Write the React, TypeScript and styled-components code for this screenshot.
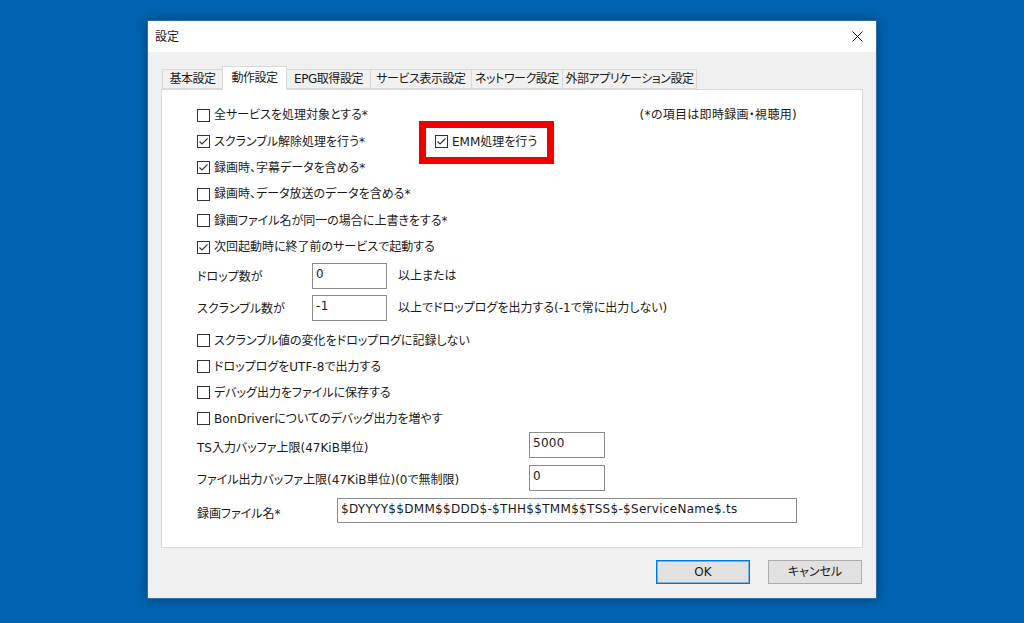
import React from 'react';
import styled, { createGlobalStyle } from 'styled-components';

const Global = createGlobalStyle`
  html, body { margin: 0; padding: 0; }
  body {
    background: #0063b1;
    width: 1024px;
    height: 623px;
    overflow: hidden;
    font-family: "DejaVu Sans", "Noto Sans CJK JP", sans-serif;
    font-size: 12px;
    line-height: 16px;
    color: #1a1a1a;
    font-feature-settings: "palt";
  }
`;

const Desktop = styled.div`
  width: 1024px;
  height: 623px;
  box-sizing: border-box;
  padding: 20px 0 0 147px;
  background: #0063b1;
`;

const Dialog = styled.div`
  width: 730px;
  height: 579px;
  box-sizing: border-box;
  border: 1px solid #2a6eae;
  background: #f0f0f0;
  box-shadow: 0 0 12px rgba(0, 0, 0, 0.35);
  display: flex;
  flex-direction: column;
`;

const TitleBar = styled.div`
  height: 31px;
  flex: none;
  background: #fff;
  display: flex;
  align-items: center;
  justify-content: space-between;
  padding-left: 7px;
`;

const TitleText = styled.span`
  font-size: 12px;
`;

const CloseButton = styled.div`
  width: 38px;
  height: 31px;
  display: flex;
  align-items: center;
  justify-content: center;
`;

const Body = styled.div`
  flex: 1;
  display: flex;
  flex-direction: column;
  padding: 14px 13px 14px 13px;
`;

const TabStrip = styled.div`
  display: flex;
  align-items: flex-end;
  height: 23px;
  margin-left: 1px;
  position: relative;
  z-index: 1;
`;

const Tab = styled.div<{ $w: number; $active?: boolean }>`
  width: ${(p) => p.$w}px;
  height: ${(p) => (p.$active ? 24 : 20)}px;
  margin-bottom: ${(p) => (p.$active ? -1 : 0)}px;
  box-sizing: border-box;
  border: 1px solid #d9d9d9;
  border-bottom: ${(p) => (p.$active ? 'none' : '1px solid #d9d9d9')};
  background: ${(p) => (p.$active ? '#fff' : '#f0f0f0')};
  display: flex;
  align-items: center;
  justify-content: center;
  padding-bottom: ${(p) => (p.$active ? 2 : 0)}px;
  white-space: nowrap;
  letter-spacing: -0.45px;
  overflow: hidden;
  & + & {
    margin-left: -1px;
  }
  position: relative;
  z-index: ${(p) => (p.$active ? 2 : 1)};
`;

const Panel = styled.div`
  height: 459px;
  box-sizing: border-box;
  border: 1px solid #d9d9d9;
  background: #fff;
  padding: 12px 0 0 35px;
`;

const Content = styled.div`
  width: 600px;
  display: flex;
  flex-direction: column;
`;

const Row = styled.div<{ $h?: number; $mt?: number; $between?: boolean }>`
  display: flex;
  align-items: center;
  height: ${(p) => p.$h ?? 26}px;
  margin-top: ${(p) => p.$mt ?? 0}px;
  justify-content: ${(p) => (p.$between ? 'space-between' : 'flex-start')};
  white-space: nowrap;
`;

const Cell = styled.div<{ $w: number; $drop?: number }>`
  width: ${(p) => p.$w}px;
  flex: none;
  padding-top: ${(p) => p.$drop ?? 0}px;
  display: flex;
  align-items: center;
`;

const CheckItem = styled.label`
  display: inline-flex;
  align-items: center;
  gap: 4px;
  height: 26px;
  position: relative;
`;

const Box = styled.span`
  width: 13px;
  height: 13px;
  box-sizing: border-box;
  border: 1px solid #333;
  background: #fff;
  display: inline-flex;
  align-items: center;
  justify-content: center;
  flex: none;
`;

const RedFrame = styled.span`
  position: absolute;
  left: -16px;
  right: -17px;
  top: -8px;
  bottom: -9px;
  border: 7px solid #f20000;
  pointer-events: none;
`;

const Note = styled.span`
  letter-spacing: 0.3px;
`;

const Field = styled.input<{ $w: number; $h?: number }>`
  width: ${(p) => p.$w}px;
  height: ${(p) => p.$h ?? 26}px;
  box-sizing: border-box;
  border: 1px solid #8c8c8c;
  background: #fff;
  font: inherit;
  font-size: 12px;
  letter-spacing: 0.3px;
  color: #1a1a1a;
  padding: 0 3px 3px 3px;
  margin: 0;
  outline: none;
  flex: none;
`;

const After = styled.span`
  margin-left: 11px;
`;

const ButtonBar = styled.div`
  display: flex;
  justify-content: flex-end;
  gap: 18px;
  margin-top: 12px;
  margin-right: 1px;
`;

const Button = styled.div<{ $default?: boolean }>`
  width: 94px;
  height: 24px;
  box-sizing: border-box;
  background: #e1e1e1;
  border: 1px solid ${(p) => (p.$default ? '#0078d7' : '#adadad')};
  box-shadow: ${(p) => (p.$default ? 'inset 0 0 0 1px rgba(0,120,215,0.45)' : 'none')};
  display: flex;
  align-items: center;
  justify-content: center;
`;

const Check: React.FC<{ checked?: boolean }> = ({ checked }) => (
  <Box>
    {checked && (
      <svg width="11" height="11" viewBox="0 0 11 11">
        <polyline points="1.5,5.5 4,8 9.5,2.5" fill="none" stroke="#333" strokeWidth="1.1" />
      </svg>
    )}
  </Box>
);

const CheckRowItem: React.FC<{ checked?: boolean; children: React.ReactNode }> = ({ checked, children }) => (
  <CheckItem>
    <Check checked={checked} />
    <span>{children}</span>
  </CheckItem>
);

const tabs: { label: string; w: number; active?: boolean }[] = [
  { label: '基本設定', w: 61 },
  { label: '動作設定', w: 65, active: true },
  { label: 'EPG取得設定', w: 85 },
  { label: 'サービス表示設定', w: 102 },
  { label: 'ネットワーク設定', w: 92 },
  { label: '外部アプリケーション設定', w: 135 },
];

export default function App() {
  return (
    <>
      <Global />
      <Desktop>
        <Dialog>
          <TitleBar>
            <TitleText>設定</TitleText>
            <CloseButton>
              <svg width="11" height="11" viewBox="0 0 11 11">
                <path d="M0.5 0.5 L10.5 10.5 M10.5 0.5 L0.5 10.5" stroke="#111" strokeWidth="1" />
              </svg>
            </CloseButton>
          </TitleBar>
          <Body>
            <TabStrip>
              {tabs.map((t) => (
                <Tab key={t.label} $w={t.w} $active={t.active}>
                  {t.label}
                </Tab>
              ))}
            </TabStrip>
            <Panel>
              <Content>
                <Row $h={26.4} $between>
                  <CheckRowItem>全サービスを処理対象とする*</CheckRowItem>
                  <Note>(*の項目は即時録画・視聴用)</Note>
                </Row>
                <Row $h={26.4}>
                  <Cell $w={238}>
                    <CheckRowItem checked>スクランブル解除処理を行う*</CheckRowItem>
                  </Cell>
                  <CheckItem>
                    <Check checked />
                    <span>EMM処理を行う</span>
                    <RedFrame />
                  </CheckItem>
                </Row>
                <Row $h={26.4}>
                  <CheckRowItem checked>録画時、字幕データを含める*</CheckRowItem>
                </Row>
                <Row $h={26.4}>
                  <CheckRowItem>録画時、データ放送のデータを含める*</CheckRowItem>
                </Row>
                <Row $h={26.4}>
                  <CheckRowItem>録画ファイル名が同一の場合に上書きをする*</CheckRowItem>
                </Row>
                <Row $h={26.4}>
                  <CheckRowItem checked>次回起動時に終了前のサービスで起動する</CheckRowItem>
                </Row>

                <Row $mt={2.6}>
                  <Cell $w={115} $drop={2}>ドロップ数が</Cell>
                  <Field $w={75} readOnly value="0" />
                  <After>以上または</After>
                </Row>
                <Row $mt={6}>
                  <Cell $w={115} $drop={2}>スクランブル数が</Cell>
                  <Field $w={75} readOnly value="-1" />
                  <After>以上でドロップログを出力する(-1で常に出力しない)</After>
                </Row>

                <Row $mt={7}>
                  <CheckRowItem>スクランブル値の変化をドロップログに記録しない</CheckRowItem>
                </Row>
                <Row>
                  <CheckRowItem>ドロップログをUTF-8で出力する</CheckRowItem>
                </Row>
                <Row>
                  <CheckRowItem>デバッグ出力をファイルに保存する</CheckRowItem>
                </Row>
                <Row>
                  <CheckRowItem>BonDriverについてのデバッグ出力を増やす</CheckRowItem>
                </Row>

                <Row>
                  <Cell $w={332} $drop={6}>TS入力バッファ上限(47KiB単位)</Cell>
                  <Field $w={76} readOnly value="5000" />
                </Row>
                <Row $mt={7}>
                  <Cell $w={332} $drop={4}>ファイル出力バッファ上限(47KiB単位)(0で無制限)</Cell>
                  <Field $w={76} readOnly value="0" />
                </Row>
                <Row $mt={7} $h={25}>
                  <Cell $w={140} $drop={7}>録画ファイル名*</Cell>
                  <Field $w={460} $h={25} readOnly value="$DYYYY$$DMM$$DDD$-$THH$$TMM$$TSS$-$ServiceName$.ts" />
                </Row>
              </Content>
            </Panel>
            <ButtonBar>
              <Button $default>OK</Button>
              <Button>キャンセル</Button>
            </ButtonBar>
          </Body>
        </Dialog>
      </Desktop>
    </>
  );
}
